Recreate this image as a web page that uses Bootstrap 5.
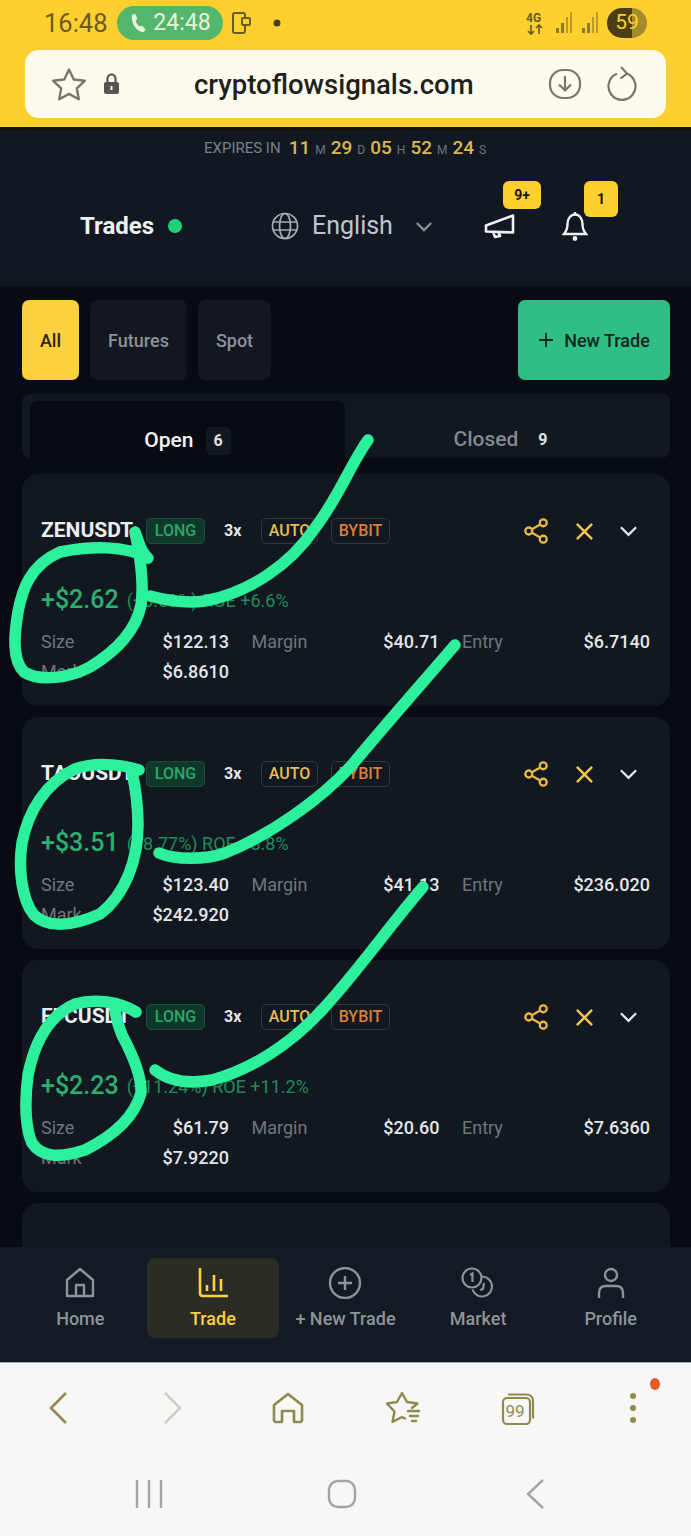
<!DOCTYPE html>
<html lang="en">
<head>
  <meta charset="UTF-8">
  <meta name="viewport" content="width=device-width, initial-scale=1.0">
  <title>Trades</title>
  <link href="https://cdn.jsdelivr.net/npm/bootstrap@5.3.0/dist/css/bootstrap.min.css" rel="stylesheet">
  <style>
    body {
      width: 691px;
      height: 1536px;
      overflow: hidden;
      position: relative;
      background: #080c12;
      font-family: Roboto, "Liberation Sans", sans-serif;
    }
    svg { display: block; flex: none; }

    /* browser chrome */
    .chrome-top { height: 127px; background: #fdd030; padding: 0 25px; }
    .status-row { height: 50px; color: #6a5a1e; padding: 0 19px 4px; }
    .status-time { font-size: 25.5px; width: 73px; }
    .call-pill { width: 106px; height: 34px; border-radius: 17px; background: #54b56c; color: #e6f3dc; font-size: 23px; gap: 6px; }
    .status-dot-wrap { margin-left: 20px; }
    .battery-dot { width: 40px; height: 30px; border-radius: 15px; background: linear-gradient(90deg, #4a3f14 62%, #a48c2a 62%); color: #fdd030; font-size: 21px; }
    .url-bar { height: 68px; border-radius: 14px; background: #fdfbee; padding: 0 28px 0 26px; }
    .url-text { font-size: 27.5px; font-weight: 500; color: #1f1f1c; left: 169px; top: 17px; line-height: 36px; }
    .chrome-line { height: 3px; background: #15120a; }

    /* app header */
    .app-head { height: 156px; background: #121821; }
    .expires { height: 36px; font-size: 15px; color: #7b8088; gap: 5px; padding-left: 204px; }
    .expires-label { margin-right: 3px; }
    .expires b { font-size: 19px; font-weight: 500; color: #dcb64e; }
    .expires i { font-style: normal; font-size: 12px; color: #6f747c; margin-left: 5px; }
    .head-row { height: 120px; padding-left: 80px; }
    .head-title { font-size: 24px; font-weight: 700; color: #eef0f2; width: 88px; }
    .live-dot { width: 14px; height: 14px; border-radius: 50%; background: #21d07a; }
    .lang { margin-left: 89px; gap: 13px; font-size: 25px; color: #c2c6cc; width: 162px; }
    .head-icon { position: relative; width: 34px; height: 34px; }
    .icon-horn { margin-left: 50px; }
    .icon-bell { margin-left: 41px; }
    .count-tag { position: absolute; background: #fdd030; color: #17160c; font-weight: 700; font-size: 14px; border-radius: 6px; display: flex; align-items: center; justify-content: center; }
    .count-nine { left: 20px; top: -28px; width: 38px; height: 28px; }
    .count-one { left: 26px; top: -28px; width: 34px; height: 36px; }

    /* filters */
    .filters { padding: 14px 21px 14px 22px; gap: 11px; height: 108px; }
    .filter-btn { height: 80px; border-radius: 7px; background: #121720; color: #8d929a; font-size: 18px; font-weight: 500; display: flex; align-items: center; justify-content: center; }
    .filter-all { width: 57px; background: #fdd040; color: #2b2610; }
    .filter-fut { width: 97px; }
    .filter-spot { width: 73px; }
    .filter-new { width: 152px; margin-left: auto; background: #2fbf85; color: #10261f; gap: 10px; }

    /* tabs */
    .tab-box { margin: 0 21px 0 22px; height: 64px; border-radius: 8px; background: #121820; position: relative; }
    .tab-open { position: absolute; left: 8px; top: 7px; width: 315px; height: 73px; border-radius: 8px 8px 0 0; background: #080c12; color: #f1f2f4; font-size: 21px; font-weight: 500; padding-top: 6px; gap: 12px; }
    .tab-closed { position: absolute; left: 323px; top: 0; right: 0; height: 64px; color: #848992; font-size: 21px; font-weight: 500; gap: 20px; padding-top: 28px; padding-right: 14px; }
    .tab-count { font-size: 16px; font-weight: 700; color: #dfe1e4; }
    .tab-open .tab-count { background: #121820; border-radius: 5px; padding: 2px 8px; }

    /* trade cards */
    .trade-list { padding: 16px 21px 0 22px; gap: 11px; }
    .trade-card { height: 232px; border: 0; border-radius: 16px; background: #121820; padding: 0 19px; }
    .trade-head { height: 28px; margin-top: 43px; gap: 11px; }
    .trade-name { font-size: 21px; font-weight: 700; color: #eceef0; width: 94px; white-space: nowrap; }
    .tag-box { height: 26px; border-radius: 5px; font-size: 16px; font-weight: 500; padding: 0 8px; display: flex; align-items: center; border: 1px solid #33363a; }
    .tag-long { background: #10382a; border-color: #17513b; color: #27a86c; width: 59px; justify-content: center; }
    .tag-auto { color: #e8bf52; padding: 0; width: 57px; justify-content: center; }
    .tag-bybit { color: #dd7f3c; padding: 0; width: 59px; justify-content: center; margin-left: 2px; }
    .tag-lev { font-size: 16px; font-weight: 700; color: #e4e6e8; width: 18px; margin-left: 8px; margin-right: 8px; }
    .trade-tools { margin-left: auto; gap: 25px; padding-right: 13px; }
    .pnl-row { margin-top: 40px; height: 30px; gap: 8px; color: #1f8c59; font-size: 18px; }
    .pnl-main { font-size: 25px; font-weight: 500; color: #2bb071; }
    .stat-grid { display: grid; grid-template-columns: repeat(3, 188px); column-gap: 22.5px; margin-top: 12px; font-size: 18px; line-height: 30px; }
    .stat-item { display: flex; justify-content: space-between; color: #70757d; }
    .stat-item b { font-weight: 500; color: #e4e6e9; }

    /* bottom nav */
    .app-nav { position: absolute; left: 0; top: 1247px; width: 691px; height: 116px; background: #121a23; padding: 11px 14px 0; }
    .nav-item { width: 132.6px; height: 80px; border-radius: 8px; color: #8e939a; font-size: 18px; font-weight: 500; padding-top: 9px; gap: 6px; white-space: nowrap; }
    .nav-item.is-on { background: #2b2c24; color: #fdd040; }

    /* phone bars */
    .phone-bar { position: absolute; left: 0; top: 1362px; width: 691px; height: 174px; background: #f7f7f6; border-top: 1px solid #a9adb2; }
    .browser-tools { height: 90px; position: relative; }
    .browser-tools > div { flex: 1 1 0; }
    .menu-alert { position: absolute; left: 650px; top: 15px; width: 10px; height: 12px; border-radius: 50%; background: #e25c24; }
    .system-nav { padding: 0 60px 0 53px; height: 82px; }
    .system-nav > div { flex: 1 1 0; }

    .scribble { position: absolute; left: 0; top: 0; pointer-events: none; }
  </style>
</head>
<body>
  <svg width="0" height="0" class="position-absolute">
    <symbol id="ic-share" viewBox="0 0 28 28"><g fill="none" stroke="currentColor" stroke-width="2.4"><circle cx="21" cy="5.5" r="3.6"/><circle cx="6" cy="14" r="3.6"/><circle cx="21" cy="22.5" r="3.6"/><path d="M9.2 12.2 17.8 7.3M9.2 15.8l8.6 4.9"/></g></symbol>
    <symbol id="ic-x" viewBox="0 0 20 20"><path d="M2 2l16 16M18 2 2 18" fill="none" stroke="currentColor" stroke-width="2.6"/></symbol>
    <symbol id="ic-chev" viewBox="0 0 20 12"><path d="M2 2l8 8 8-8" fill="none" stroke="currentColor" stroke-width="2.4"/></symbol>
  </svg>

  <div class="chrome-top">
    <div class="status-row d-flex align-items-center">
      <div class="status-time">16:48</div>
      <div class="call-pill d-flex align-items-center justify-content-center">
        <svg width="18" height="20" viewBox="0 0 18 20"><path d="M3 1.5 6.5 1l2 5-2 1.6c.8 2.6 2 4.4 4 6l2.3-1.1 3.7 3.8-1.7 3C8 19 1.500 11 3 1.500z" fill="#e6f3dc"/></svg>
        <span>24:48</span>
      </div>
      <svg class="ms-2" width="22" height="24" viewBox="0 0 22 24" fill="none" stroke="#6a5a1e" stroke-width="2"><rect x="2" y="2" width="12" height="20" rx="2"/><rect x="11" y="7" width="8" height="7" rx="1" fill="#fdd030"/></svg>
      <div class="status-dot-wrap"><svg width="8" height="8"><circle cx="4" cy="4" r="3.500" fill="#4a3f14"/></svg></div>
      <div class="ms-auto d-flex align-items-center gap-2">
        <svg width="22" height="26" viewBox="0 0 22 26"><text x="1" y="12" font-size="12" font-weight="700" font-family="Roboto" fill="#6a5a1e">4G</text><path d="M6 15v9M3 21l3 3 3-3M14 24v-9M11 18l3-3 3 3" stroke="#6a5a1e" stroke-width="1.600" fill="none"/></svg>
        <svg width="18" height="24" viewBox="0 0 18 24" fill="#8c7a2a"><rect x="1" y="17" width="3" height="5"/><rect x="6" y="12" width="3" height="10"/><rect x="11" y="6" width="2" height="16" opacity=".6"/><rect x="15" y="1" width="2" height="21" opacity=".6"/></svg>
        <svg width="18" height="24" viewBox="0 0 18 24" fill="#8c7a2a"><rect x="1" y="17" width="3" height="5"/><rect x="6" y="12" width="3" height="10"/><rect x="11" y="6" width="2" height="16" opacity=".6"/><rect x="15" y="1" width="2" height="21" opacity=".6"/></svg>
        <div class="battery-dot d-flex align-items-center justify-content-center">59</div>
      </div>
    </div>
    <div class="url-bar d-flex align-items-center position-relative">
      <svg width="36" height="34" viewBox="0 0 36 34" fill="none" stroke="#77766f" stroke-width="2.400" stroke-linejoin="round"><path d="M18 2.500l4.800 10 11 1.300-8 7.600 2 10.800L18 26.900 8.200 32.200l2-10.800-8-7.600 11-1.300z"/></svg>
      <svg class="ms-3" width="17" height="24" viewBox="0 0 17 24"><path d="M4.500 10V6.500a4 4 0 0 1 8 0V10" fill="none" stroke="#55544f" stroke-width="2.200"/><rect x="1" y="10" width="15" height="12" rx="2" fill="#55544f"/><rect x="7.500" y="14" width="2" height="4" fill="#fdfbee"/></svg>
      <div class="url-text position-absolute">cryptoflowsignals.com</div>
      <svg class="ms-auto" width="34" height="32" viewBox="0 0 34 32" fill="none" stroke="#77766f" stroke-width="2.200"><rect x="2" y="2" width="30" height="28" rx="13"/><path d="M17 8v14M11 16.500l6 6 6-6"/></svg>
      <svg class="ms-4" width="32" height="36" viewBox="0 0 32 36" fill="none" stroke="#77766f" stroke-width="2.200"><path d="M11 7.800a13.500 13.500 0 1 0 10 0"/><path d="M15 1l6 6.500-6.500 5"/></svg>
    </div>
  </div>
  <div class="chrome-line"></div>

  <header class="app-head">
    <div class="expires d-flex align-items-center">
      <span class="expires-label">EXPIRES IN</span>
      <span><b>11</b><i>M</i></span>
      <span><b>29</b><i>D</i></span>
      <span><b>05</b><i>H</i></span>
      <span><b>52</b><i>M</i></span>
      <span><b>24</b><i>S</i></span>
    </div>
    <div class="head-row d-flex align-items-center">
      <div class="head-title">Trades</div>
      <span class="live-dot"></span>
      <div class="lang d-flex align-items-center">
        <svg width="28" height="28" viewBox="0 0 28 28" fill="none" stroke="#a6abb2" stroke-width="1.700"><circle cx="14" cy="14" r="12.500"/><ellipse cx="14" cy="14" rx="5.500" ry="12.500"/><path d="M2 10h24M2 18h24"/></svg>
        <span>English</span>
        <svg class="ms-auto" width="18" height="11" color="#8b9097"><use href="#ic-chev"/></svg>
      </div>
      <div class="head-icon icon-horn d-flex align-items-center justify-content-center">
        <svg width="32" height="26" viewBox="0 0 32 26" fill="none" stroke="#eef0f2" stroke-width="2.600" stroke-linejoin="round"><path d="M2 12.500 29 2.500v17L2 18.500zM9 19l2 5 5-1-1.500-3.500"/></svg>
        <span class="count-tag count-nine">9+</span>
      </div>
      <div class="head-icon icon-bell d-flex align-items-center justify-content-center">
        <svg width="26" height="30" viewBox="0 0 26 30" fill="none" stroke="#eef0f2" stroke-width="2.400"><path d="M2 23h22c-2.500-3-3.500-5-3.500-10 0-5-3-9.500-7.500-9.500S5.500 8 5.500 13c0 5-1 7-3.500 10z"/><path d="M13 1v2.500"/><circle cx="13" cy="27.500" r="1.200" fill="#eef0f2"/></svg>
        <span class="count-tag count-one">1</span>
      </div>
    </div>
  </header>

  <main>
    <div class="filters d-flex">
      <div class="filter-btn filter-all">All</div>
      <div class="filter-btn filter-fut">Futures</div>
      <div class="filter-btn filter-spot">Spot</div>
      <div class="filter-btn filter-new">
        <svg width="16" height="16" viewBox="0 0 16 16"><path d="M8 1v14M1 8h14" stroke="#10261f" stroke-width="1.800"/></svg>
        <span>New Trade</span>
      </div>
    </div>

    <div class="tab-box">
      <div class="tab-open d-flex align-items-center justify-content-center"><span>Open</span><span class="tab-count">6</span></div>
      <div class="tab-closed d-flex align-items-center justify-content-center"><span>Closed</span><span class="tab-count">9</span></div>
    </div>

    <div class="trade-list d-flex flex-column">
      <div class="card trade-card">
        <div class="trade-head d-flex align-items-center">
          <div class="trade-name">ZENUSDT</div>
          <span class="tag-box tag-long">LONG</span>
          <span class="tag-lev">3x</span>
          <span class="tag-box tag-auto">AUTO</span>
          <span class="tag-box tag-bybit">BYBIT</span>
          <div class="trade-tools d-flex align-items-center">
            <svg width="27" height="28" color="#e8b64a"><use href="#ic-share"/></svg>
            <svg width="19" height="19" color="#f0c552"><use href="#ic-x"/></svg>
            <svg width="19" height="12" color="#e4e6e8"><use href="#ic-chev"/></svg>
          </div>
        </div>
        <div class="pnl-row d-flex align-items-center"><span class="pnl-main">+$2.62</span><span>(+6.59%) ROE +6.6%</span></div>
        <div class="stat-grid">
          <div class="stat-item"><span>Size</span><b>$122.13</b></div>
          <div class="stat-item"><span>Margin</span><b>$40.71</b></div>
          <div class="stat-item"><span>Entry</span><b>$6.7140</b></div>
          <div class="stat-item"><span>Mark</span><b>$6.8610</b></div>
        </div>
      </div>

      <div class="card trade-card">
        <div class="trade-head d-flex align-items-center">
          <div class="trade-name">TAOUSDT</div>
          <span class="tag-box tag-long">LONG</span>
          <span class="tag-lev">3x</span>
          <span class="tag-box tag-auto">AUTO</span>
          <span class="tag-box tag-bybit">BYBIT</span>
          <div class="trade-tools d-flex align-items-center">
            <svg width="27" height="28" color="#e8b64a"><use href="#ic-share"/></svg>
            <svg width="19" height="19" color="#f0c552"><use href="#ic-x"/></svg>
            <svg width="19" height="12" color="#e4e6e8"><use href="#ic-chev"/></svg>
          </div>
        </div>
        <div class="pnl-row d-flex align-items-center"><span class="pnl-main">+$3.51</span><span>(+8.77%) ROE +8.8%</span></div>
        <div class="stat-grid">
          <div class="stat-item"><span>Size</span><b>$123.40</b></div>
          <div class="stat-item"><span>Margin</span><b>$41.13</b></div>
          <div class="stat-item"><span>Entry</span><b>$236.020</b></div>
          <div class="stat-item"><span>Mark</span><b>$242.920</b></div>
        </div>
      </div>

      <div class="card trade-card">
        <div class="trade-head d-flex align-items-center">
          <div class="trade-name">FFCUSDT</div>
          <span class="tag-box tag-long">LONG</span>
          <span class="tag-lev">3x</span>
          <span class="tag-box tag-auto">AUTO</span>
          <span class="tag-box tag-bybit">BYBIT</span>
          <div class="trade-tools d-flex align-items-center">
            <svg width="27" height="28" color="#e8b64a"><use href="#ic-share"/></svg>
            <svg width="19" height="19" color="#f0c552"><use href="#ic-x"/></svg>
            <svg width="19" height="12" color="#e4e6e8"><use href="#ic-chev"/></svg>
          </div>
        </div>
        <div class="pnl-row d-flex align-items-center"><span class="pnl-main">+$2.23</span><span>(+11.24%) ROE +11.2%</span></div>
        <div class="stat-grid">
          <div class="stat-item"><span>Size</span><b>$61.79</b></div>
          <div class="stat-item"><span>Margin</span><b>$20.60</b></div>
          <div class="stat-item"><span>Entry</span><b>$7.6360</b></div>
          <div class="stat-item"><span>Mark</span><b>$7.9220</b></div>
        </div>
      </div>

      <div class="card trade-card"></div>
    </div>
  </main>

  <nav class="app-nav d-flex">
    <div class="nav-item d-flex flex-column align-items-center">
      <svg width="32" height="32" viewBox="0 0 32 32" fill="none" stroke="#8e939a" stroke-width="2.400" stroke-linejoin="round"><path d="M3 29V13L16 2l13 11v16z"/><path d="M12 29V18h8v11"/></svg>
      <span>Home</span>
    </div>
    <div class="nav-item is-on d-flex flex-column align-items-center">
      <svg width="32" height="32" viewBox="0 0 32 32" fill="none" stroke="#fdd040" stroke-width="2.600"><path d="M3 1v25q0 3 3 3h25M10 18v6M17 8v16M24 12v12"/></svg>
      <span>Trade</span>
    </div>
    <div class="nav-item d-flex flex-column align-items-center">
      <svg width="34" height="32" viewBox="0 0 34 32" fill="none" stroke="#8e939a" stroke-width="2.400"><circle cx="17" cy="16" r="15"/><path d="M17 9v14M10 16h14"/></svg>
      <span>+ New Trade</span>
    </div>
    <div class="nav-item d-flex flex-column align-items-center">
      <svg width="34" height="32" viewBox="0 0 34 32" fill="none" stroke="#8e939a" stroke-width="2.200"><circle cx="11" cy="11" r="9.500"/><path d="M9 8l2.500-1.500V15"/><path d="M21 9.500a10 10 0 1 1-9.500 13"/><path d="M23 16l-1 6-3 1"/></svg>
      <span>Market</span>
    </div>
    <div class="nav-item d-flex flex-column align-items-center">
      <svg width="30" height="32" viewBox="0 0 30 32" fill="none" stroke="#8e939a" stroke-width="2.400"><circle cx="15" cy="8" r="6"/><path d="M3 31v-5q0-7 7-7h10q7 0 7 7v5"/></svg>
      <span>Profile</span>
    </div>
  </nav>

  <div class="phone-bar">
    <div class="browser-tools d-flex align-items-center">
      <div class="d-flex justify-content-center"><svg width="20" height="34" viewBox="0 0 20 34" fill="none" stroke="#8f8a4e" stroke-width="2.600"><path d="M18 2 3 17l15 15"/></svg></div>
      <div class="d-flex justify-content-center"><svg width="20" height="34" viewBox="0 0 20 34" fill="none" stroke="#cfcfc2" stroke-width="2.600"><path d="M2 2l15 15L2 32"/></svg></div>
      <div class="d-flex justify-content-center"><svg width="32" height="32" viewBox="0 0 32 32" fill="none" stroke="#8f8a4e" stroke-width="2.600" stroke-linejoin="round"><path d="M2 28V13L16 2l14 11v15q0 2-2 2h-6V19h-12v11H4q-2 0-2-2z"/></svg></div>
      <div class="d-flex justify-content-center"><svg width="36" height="34" viewBox="0 0 36 34" fill="none" stroke="#8f8a4e" stroke-width="2.400" stroke-linejoin="round" stroke-linecap="round"><path d="M27 17l5.500-4.500L22 11 17 2l-5 9-10 1.500 7.500 8-2 10.500 9.500-5 3 1.500"/><path d="M23 20h11M25 25h8M27 30h4"/></svg></div>
      <div class="d-flex justify-content-center"><svg width="34" height="34" viewBox="0 0 34 34" fill="none" stroke="#8f8a4e" stroke-width="2.200"><rect x="2" y="7" width="27" height="26" rx="4"/><path d="M7 3.500h18q7 0 7 7v17"/><text x="4.500" y="25.500" font-size="17" font-family="Roboto" fill="#8f8a4e" stroke="none">99</text></svg></div>
      <div class="d-flex justify-content-center"><svg width="8" height="32" viewBox="0 0 8 32" fill="#8f8a4e"><circle cx="4" cy="4" r="3"/><circle cx="4" cy="16" r="3"/><circle cx="4" cy="28" r="3"/></svg></div>
      <span class="menu-alert"></span>
    </div>
    <div class="system-nav d-flex align-items-center">
      <div class="d-flex justify-content-center"><svg width="28" height="28" viewBox="0 0 28 28" stroke="#a2a4a5" stroke-width="2.400"><path d="M2 0v28M14 0v28M26 0v28"/></svg></div>
      <div class="d-flex justify-content-center"><svg width="30" height="30" viewBox="0 0 30 30" fill="none" stroke="#a2a4a5" stroke-width="2.400"><rect x="2" y="2" width="26" height="26" rx="9"/></svg></div>
      <div class="d-flex justify-content-center"><svg width="20" height="30" viewBox="0 0 20 30" fill="none" stroke="#a2a4a5" stroke-width="2.400"><path d="M18 1 3 15l15 14"/></svg></div>
    </div>
  </div>

  <!-- marker strokes drawn over the screenshot -->
  <svg class="scribble" width="691" height="1536" viewBox="0 0 691 1536" fill="none" stroke="#2cf09b" stroke-width="11.500" stroke-linecap="round" stroke-linejoin="round">
    <path d="M135 532C140 545 141 552 148 558C125 545 90 546 60 552C30 565 22 590 18 612C14 635 12 660 24 672C40 682 70 678 90 667C118 650 136 630 141 605C144 585 141 560 135 532"/>
    <path d="M150 596C165 600 185 604 205 601C250 592 290 565 315 528C340 495 350 465 368 440"/>
    <path d="M139 770C120 764 95 762 75 769C45 783 28 812 22 843C18 870 22 900 34 915C50 930 75 925 100 914C125 895 138 860 138 825C138 805 136 790 132 772"/>
    <path d="M159 853C175 860 205 860 225 853C270 835 320 800 352 765C385 725 425 680 455 645"/>
    <path d="M136 1012C120 1002 95 998 75 1004C50 1015 35 1040 28 1075C24 1105 26 1130 32 1143C42 1158 60 1158 85 1150C115 1135 135 1115 141 1093C142 1075 130 1050 122 1035C118 1025 116 1018 115 1010"/>
    <path d="M155 1070C170 1082 190 1084 212 1080C250 1070 290 1045 322 1010C355 975 390 925 423 887"/>
  </svg>
</body>
</html>
